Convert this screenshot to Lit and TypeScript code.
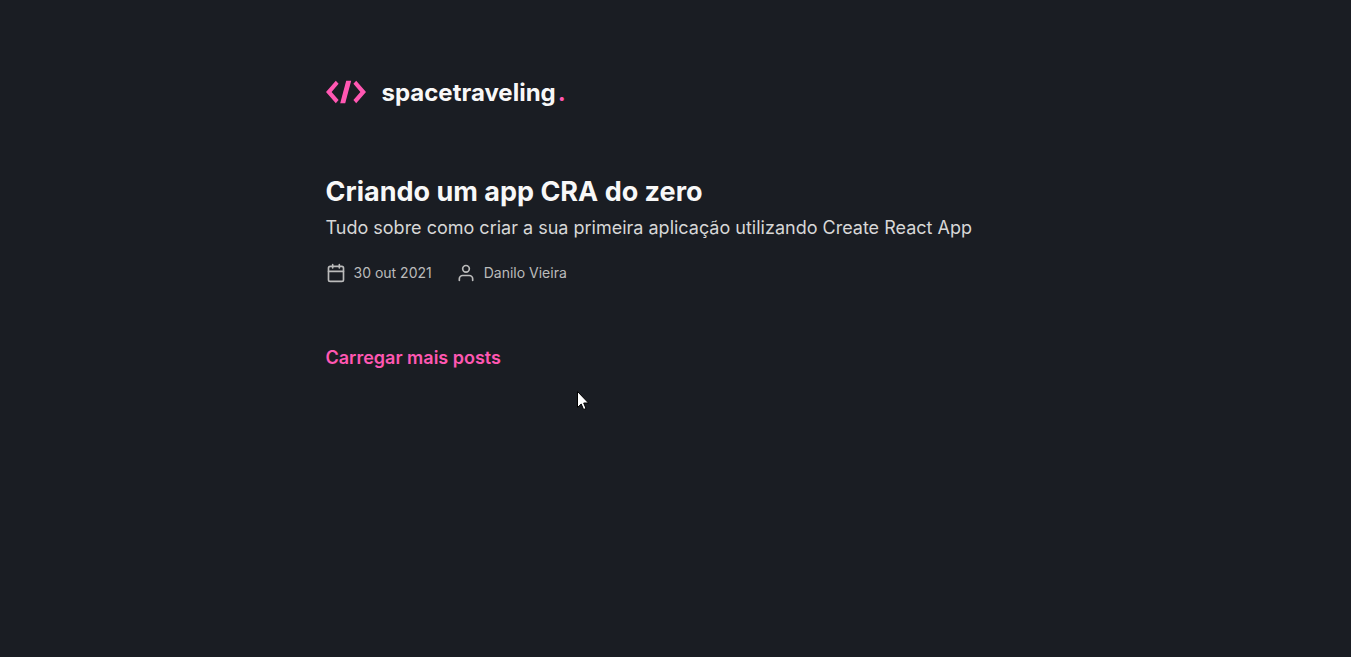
import { LitElement, html, css, svg } from "lit";
import { customElement, state } from "lit/decorators.js";

interface Post {
  slug: string;
  title: string;
  subtitle: string;
  date: string;
  isoDate: string;
  author: string;
}

const calendarIcon = html`<svg class="icon" viewBox="0 0 24 24" aria-hidden="true">
  ${svg`<rect x="3" y="4" width="18" height="18" rx="2" ry="2"></rect>
  <path d="M16 2v4M8 2v4M3 10h18"></path>`}
</svg>`;

const userIcon = html`<svg class="icon" viewBox="0 0 24 24" aria-hidden="true">
  ${svg`<path d="M20 21v-2a4 4 0 0 0-4-4H8a4 4 0 0 0-4 4v2"></path>
  <circle cx="12" cy="7" r="4"></circle>`}
</svg>`;

@customElement("site-header")
export class SiteHeader extends LitElement {
  static styles = css`
    :host {
      display: block;
    }
    .logo {
      display: inline-flex;
      align-items: center;
      gap: 16px;
      color: #f8f8f8;
      font-size: 24px;
      font-weight: 700;
      line-height: 32px;
      text-decoration: none;
    }
    .mark {
      width: 40px;
      height: 24px;
      fill: #ff57b2;
    }
    .name {
      display: flex;
      gap: 2px;
      padding-top: 2px;
    }
    .dot {
      color: #ff57b2;
    }
  `;

  render() {
    return html`<header>
      <a class="logo" href="#">
        <svg class="mark" viewBox="0 0 40 24" aria-hidden="true">
          <path d="M9.8 0.8L12.6 3.8L5.6 12L12.6 20L9.8 23.2L0 12Z"></path>
          <path d="M20.2 0.8H25.2L19.2 23.2H14.2Z"></path>
          <path d="M30.2 0.8L27.4 3.8L34.4 12L27.4 20L30.2 23.2L40 12Z"></path>
        </svg>
        <span class="name"><span>spacetraveling</span><span class="dot">.</span></span>
      </a>
    </header>`;
  }
}

@customElement("app-root")
export class AppRoot extends LitElement {
  static styles = css`
    :host {
      display: block;
      box-sizing: border-box;
      min-height: 100vh;
      padding: 75px 20px;
      background: #1a1d23;
      color: #d7d7d7;
      font-family: Inter, "Liberation Sans", sans-serif;
    }
    .container {
      display: flex;
      flex-direction: column;
      gap: 63px;
      max-width: 700px;
      margin: 0 auto;
    }
    .posts {
      display: flex;
      flex-direction: column;
      align-items: flex-start;
      gap: 60px;
    }
    .post {
      display: block;
      color: inherit;
      text-decoration: none;
    }
    .title {
      margin: 0;
      color: #f8f8f8;
      font-size: 27px;
      font-weight: 700;
      line-height: 40px;
    }
    .subtitle {
      margin: 0;
      font-size: 18px;
      line-height: 32px;
    }
    .meta {
      display: flex;
      gap: 24px;
      margin-top: 16px;
      color: #bbbbbb;
      font-size: 14px;
      line-height: 26px;
    }
    .item {
      display: flex;
      align-items: center;
      gap: 8px;
    }
    .icon {
      width: 20px;
      height: 20px;
      fill: none;
      stroke: currentColor;
      stroke-width: 2;
      stroke-linecap: round;
      stroke-linejoin: round;
    }
    .more {
      padding: 0;
      border: 0;
      background: none;
      color: #ff57b2;
      font: inherit;
      font-size: 18px;
      font-weight: 600;
      line-height: 24px;
      cursor: pointer;
    }
    .cursor {
      position: absolute;
      top: 391px;
      left: 577px;
      width: 12px;
      height: 19px;
      pointer-events: none;
    }
  `;

  @state() private posts: Post[] = [
    {
      slug: "criando-um-app-cra-do-zero",
      title: "Criando um app CRA do zero",
      subtitle:
        "Tudo sobre como criar a sua primeira aplicação utilizando Create React App",
      date: "30 out 2021",
      isoDate: "2021-10-30",
      author: "Danilo Vieira",
    },
  ];

  render() {
    return html`
      <div class="container">
        <site-header></site-header>
        <main class="posts">
          ${this.posts.map(
            (post) => html`<a class="post" href="#${post.slug}">
              <h1 class="title">${post.title}</h1>
              <p class="subtitle">${post.subtitle}</p>
              <div class="meta">
                <span class="item">${calendarIcon}<time datetime=${post.isoDate}>${post.date}</time></span>
                <span class="item">${userIcon}<span>${post.author}</span></span>
              </div>
            </a>`
          )}
          <button class="more" type="button">Carregar mais posts</button>
        </main>
      </div>
      <svg class="cursor" viewBox="0 0 12 19" aria-hidden="true">
        <path
          d="M0.5 0.5V16.5L4.2 13L6.6 18.5L9 17.5L6.7 12H11.5Z"
          fill="#ffffff"
          stroke="#000000"
          stroke-width="1"
        ></path>
      </svg>
    `;
  }
}
